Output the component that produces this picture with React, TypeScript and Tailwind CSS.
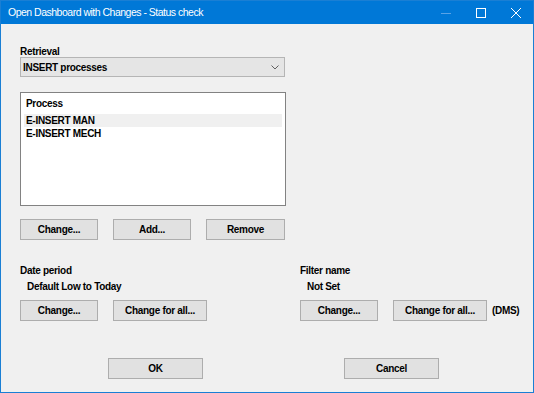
import React from "react";

function Btn({ label, w = "w-[78px]" }: { label: string; w?: string }) {
  return (
    <div
      className={`${w} h-[21px] flex items-center justify-center bg-[#e1e1e1] border border-[#adadad] text-black`}
    >
      {label}
    </div>
  );
}

export default function App() {
  return (
    <div
      className="w-[534px] h-[393px] flex flex-col border border-[#1a7fd4] bg-[#f0f0f0] overflow-hidden"
      style={{ fontFamily: '"Liberation Sans", Arial, sans-serif' }}
    >
      {/* title bar */}
      <div className="h-[23px] shrink-0 bg-[#0078d7] flex items-center text-white">
        <span className="pl-[7px] text-[10.5px] tracking-[-0.5px] flex-1 whitespace-nowrap">
          Open Dashboard with Changes - Status check
        </span>
        <div className="flex h-full">
          <div className="w-[35px] h-full flex items-center justify-center">
            <svg width="10" height="10" viewBox="0 0 10 10">
              <line x1="0" y1="5.5" x2="10" y2="5.5" stroke="#5aa3e6" strokeWidth="1" />
            </svg>
          </div>
          <div className="w-[35px] h-full flex items-center justify-center">
            <svg width="10" height="10" viewBox="0 0 10 10">
              <rect x="0.5" y="0.5" width="9" height="9" fill="none" stroke="white" strokeWidth="1" />
            </svg>
          </div>
          <div className="w-[35px] h-full flex items-center justify-center">
            <svg width="10" height="10" viewBox="0 0 10 10">
              <path d="M0 0 L10 10 M10 0 L0 10" stroke="white" strokeWidth="1" />
            </svg>
          </div>
        </div>
      </div>

      {/* body */}
      <div className="flex-1 flex flex-col pl-[19px] text-[10px] tracking-[-0.3px] font-bold text-black">
        <div className="mt-[22px] h-[11px] leading-[11px]">Retrieval</div>
        <div className="mt-0 w-[265px] h-[20px] flex items-center justify-between bg-[#e5e5e5] border border-[#b5b5b5] pl-[2px] pr-[5px]">
          <span>INSERT processes</span>
          <svg width="8" height="5" viewBox="0 0 8 5">
            <path d="M0.5 0.5 L4 4 L7.5 0.5" fill="none" stroke="#606060" strokeWidth="1" />
          </svg>
        </div>

        {/* list */}
        <div className="mt-[15px] w-[266px] h-[114px] bg-white border border-[#828282] px-[3px] pt-[4px]">
          <div className="h-[13px] leading-[13px] pl-[2px]">Process</div>
          <div className="mt-[4px] h-[13px] leading-[13px] pl-[2px] bg-[#f0f0f0]">E-INSERT MAN</div>
          <div className="h-[13px] leading-[13px] pl-[2px]">E-INSERT MECH</div>
        </div>

        <div className="mt-[13px] flex gap-[15px]">
          <Btn label="Change..." />
          <Btn label="Add..." />
          <Btn label="Remove" w="w-[79px]" />
        </div>

        <div className="flex mt-[24px]">
          <div className="w-[280px] flex flex-col">
            <div className="h-[13px] leading-[13px]">Date period</div>
            <div className="mt-[3px] h-[13px] leading-[13px] pl-[7px]">Default Low to Today</div>
            <div className="mt-[7px] flex gap-[15px]">
              <Btn label="Change..." />
              <Btn label="Change for all..." w="w-[94px]" />
            </div>
          </div>
          <div className="flex flex-col">
            <div className="h-[13px] leading-[13px]">Filter name</div>
            <div className="mt-[3px] h-[13px] leading-[13px] pl-[7px]">Not Set</div>
            <div className="mt-[7px] flex items-center gap-[15px]">
              <Btn label="Change..." />
              <Btn label="Change for all..." w="w-[94px]" />
              <span className="-ml-[10px]">(DMS)</span>
            </div>
          </div>
        </div>

        <div className="mt-[37px] flex pl-[88px] gap-[141px]">
          <Btn label="OK" w="w-[95px]" />
          <Btn label="Cancel" w="w-[95px]" />
        </div>
      </div>
    </div>
  );
}
